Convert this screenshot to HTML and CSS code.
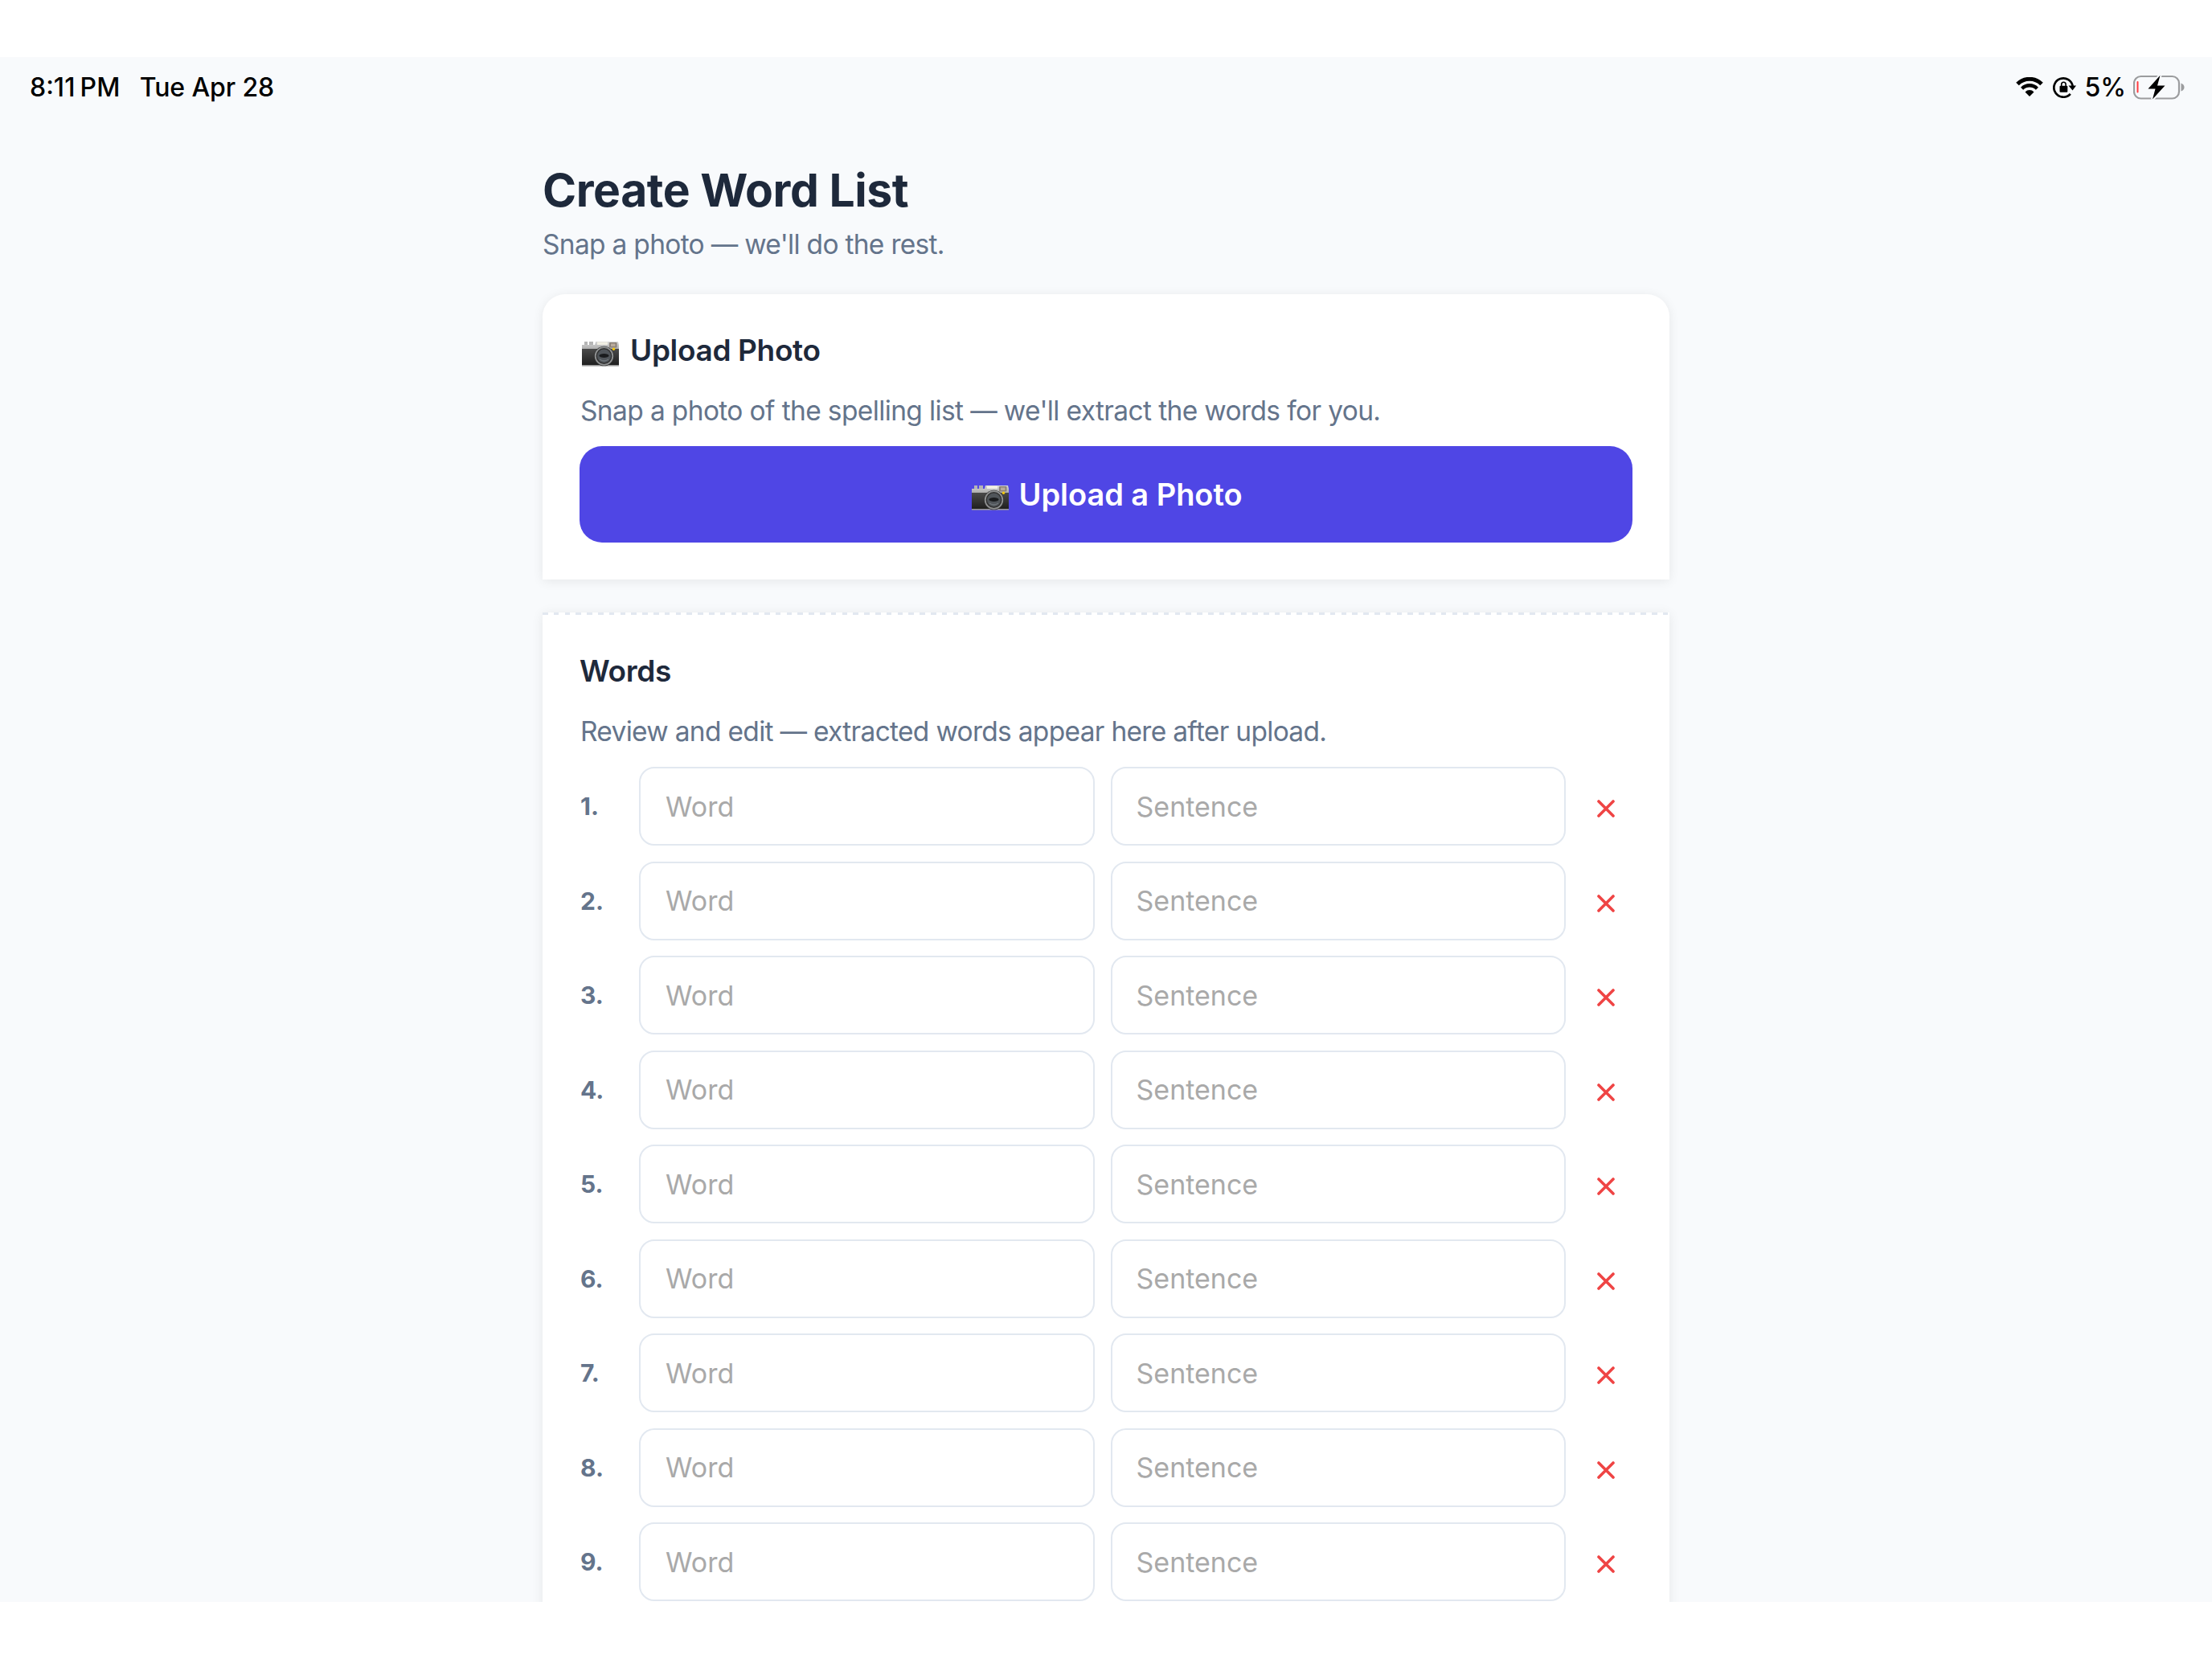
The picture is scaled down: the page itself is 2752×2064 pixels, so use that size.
FILE: index.html
```html
<!DOCTYPE html>
<html lang="en">

<head>
    <meta charset="utf-8">
    <title>Create Word List</title>
    <link rel="stylesheet" href="styles.css">
</head>

<body>
    <!-- camera icon, used in the heading and in the button -->
    <svg class="defs" width="0" height="0">
        <defs>
            <linearGradient id="silver" x1="0" y1="0" x2="0" y2="1">
                <stop offset="0" stop-color="#d6d6d6"/>
                <stop offset="1" stop-color="#a9a9a9"/>
            </linearGradient>
            <linearGradient id="leather" x1="0" y1="0" x2="0" y2="1">
                <stop offset="0" stop-color="#4a4a4a"/>
                <stop offset="1" stop-color="#1d1d1d"/>
            </linearGradient>
        </defs>
        <symbol id="camera" viewBox="0 0 46 32">
            <rect x="3" y="1" width="4" height="5" fill="#b5b5b5"/>
            <rect x="9" y="1" width="5" height="5" fill="#b5b5b5"/>
            <path d="M0 5h16l1-4h28l1 4v6H0z" fill="url(#silver)"/>
            <rect x="19" y="1.5" width="13" height="3.5" fill="#f1efe4"/>
            <rect x="0" y="10" width="46" height="21" fill="url(#leather)"/>
            <rect x="0" y="30" width="46" height="1.6" fill="#999"/>
            <rect x="34" y="2" width="9.5" height="6.5" rx="1" fill="#8b8178"/>
            <rect x="36" y="3.5" width="5.5" height="3.5" fill="#b9ab9d"/>
            <circle cx="27.5" cy="19" r="12.3" fill="#303030"/>
            <circle cx="27.5" cy="19" r="10.8" fill="none" stroke="#8f9192" stroke-width="1.8"/>
            <circle cx="27.5" cy="19" r="8.5" fill="#50555a"/>
            <ellipse cx="27.5" cy="18.5" rx="6" ry="2.5" fill="#1a1c1e"/>
            <path d="M22 23q5.5 4 11 0" fill="none" stroke="#70767b" stroke-width="1.3"/>
            <circle cx="39.5" cy="10.2" r="1.7" fill="#f5c80c"/>
        </symbol>
    </svg>

    <div class="screen">
        <div class="status">
            <span class="time">8:11<span class="pm">PM</span></span>
            <span class="date">Tue Apr 28</span>
            <div class="right">
                <svg class="wifi" viewBox="0 0 34 24">
                    <path d="M2 8.6a21 21 0 0 1 30 0" fill="none" stroke="#000" stroke-width="5"/>
                    <path d="M7.6 14.2a13.3 13.3 0 0 1 18.8 0" fill="none" stroke="#000" stroke-width="4.4"/>
                    <path d="M11.5 18.4a7.5 7.5 0 0 1 11 0l-5.500 5.500z"/>
                </svg>
                <svg class="lock" viewBox="0 0 29 27">
                    <path d="M21.8 21.8A11.7 11.7 0 1 1 24.7 13" fill="none" stroke="#000" stroke-width="2.7"/>
                    <path d="M19.5 11.500h9.500l-4.500 6z"/>
                    <rect x="8.500" y="11.800" width="9.800" height="8" rx="1"/>
                    <path d="M10.700 12.500v-2.500a2.700 2.700 0 0 1 5.400 0v2.500" fill="none" stroke="#000" stroke-width="1.600"/>
                </svg>
                <span class="percent">5%</span>
                <svg class="battery" viewBox="0 0 64 31">
                    <rect x="1" y="2" width="56" height="27.5" rx="8.5" fill="none" stroke="#9b9c9e" stroke-width="2.200"/>
                    <path d="M59.5 10.5q4 1.5 4 5t-4 5z" fill="#9b9c9e"/>
                    <rect x="4.5" y="8" width="2" height="14.5" rx="1" fill="#ff3b3f"/>
                    <path d="M33.5 .8L18.5 17.5h9L24 30.5L39.5 13.5h-9.5z" stroke="#f8fafc" stroke-width="4"/>
                    <path d="M33.5 .8L18.5 17.5h9L24 30.5L39.5 13.5h-9.5z"/>
                </svg>
            </div>
        </div>

        <div class="page">
            <h1>Create Word List</h1>
            <p class="subtitle">Snap a photo — we'll do the rest.</p>

            <div class="card upload">
                <h2><svg class="camera"><use href="#camera"/></svg><span>Upload Photo</span></h2>
                <p class="hint">Snap a photo of the spelling list — we'll extract the words for you.</p>
                <button class="btn"><svg class="camera"><use href="#camera"/></svg><span>Upload a Photo</span></button>
            </div>

            <div class="card words">
                <h2>Words</h2>
                <p>Review and edit — extracted words appear here after upload.</p>
                <div class="rows">
                    <div class="row">
                        <span class="num">1.</span>
                        <input type="text" placeholder="Word">
                        <input type="text" placeholder="Sentence">
                        <button class="del"><svg viewBox="0 0 22 22"><path d="M2 2l18 18M20 2L2 20"/></svg></button>
                    </div>
                    <div class="row">
                        <span class="num">2.</span>
                        <input type="text" placeholder="Word">
                        <input type="text" placeholder="Sentence">
                        <button class="del"><svg viewBox="0 0 22 22"><path d="M2 2l18 18M20 2L2 20"/></svg></button>
                    </div>
                    <div class="row">
                        <span class="num">3.</span>
                        <input type="text" placeholder="Word">
                        <input type="text" placeholder="Sentence">
                        <button class="del"><svg viewBox="0 0 22 22"><path d="M2 2l18 18M20 2L2 20"/></svg></button>
                    </div>
                    <div class="row">
                        <span class="num">4.</span>
                        <input type="text" placeholder="Word">
                        <input type="text" placeholder="Sentence">
                        <button class="del"><svg viewBox="0 0 22 22"><path d="M2 2l18 18M20 2L2 20"/></svg></button>
                    </div>
                    <div class="row">
                        <span class="num">5.</span>
                        <input type="text" placeholder="Word">
                        <input type="text" placeholder="Sentence">
                        <button class="del"><svg viewBox="0 0 22 22"><path d="M2 2l18 18M20 2L2 20"/></svg></button>
                    </div>
                    <div class="row">
                        <span class="num">6.</span>
                        <input type="text" placeholder="Word">
                        <input type="text" placeholder="Sentence">
                        <button class="del"><svg viewBox="0 0 22 22"><path d="M2 2l18 18M20 2L2 20"/></svg></button>
                    </div>
                    <div class="row">
                        <span class="num">7.</span>
                        <input type="text" placeholder="Word">
                        <input type="text" placeholder="Sentence">
                        <button class="del"><svg viewBox="0 0 22 22"><path d="M2 2l18 18M20 2L2 20"/></svg></button>
                    </div>
                    <div class="row">
                        <span class="num">8.</span>
                        <input type="text" placeholder="Word">
                        <input type="text" placeholder="Sentence">
                        <button class="del"><svg viewBox="0 0 22 22"><path d="M2 2l18 18M20 2L2 20"/></svg></button>
                    </div>
                    <div class="row">
                        <span class="num">9.</span>
                        <input type="text" placeholder="Word">
                        <input type="text" placeholder="Sentence">
                        <button class="del"><svg viewBox="0 0 22 22"><path d="M2 2l18 18M20 2L2 20"/></svg></button>
                    </div>
                </div>
            </div>
        </div>
    </div>
</body>

</html>
```
FILE: styles.css
```css
* {
    box-sizing: border-box;
}
body {
    margin: 0;
    padding-top: 71px;
    background-color: #fff;
    color: #1e293b;
    font-family: Inter, "Liberation Sans", sans-serif;
}
h1, h2, p {
    margin: 0;
}
input, button {
    font-family: inherit;
}
.defs {
    display: block;
    height: 0;
}
.screen {
    height: 1922px;
    overflow: hidden;
    background-color: #f8fafc;
}

/* status bar */
.status {
    display: flex;
    align-items: center;
    height: 74px;
    padding: 0 34px 0 37px;
    color: #000;
    font-size: 32px;
    font-weight: 500;
}
.pm {
    margin-left: 6px;
    letter-spacing: 0.3px;
}
.date {
    margin-left: 24px;
    letter-spacing: -0.1px;
}
.right {
    display: flex;
    align-items: center;
    margin-left: auto;
}
.wifi {
    width: 34px;
    height: 24px;
}
.lock {
    width: 29px;
    height: 27px;
    margin-left: 12px;
}
.percent {
    margin-left: 10px;
}
.battery {
    width: 64px;
    height: 31px;
    margin-left: 9px;
}

.page {
    width: 1402px;
    margin: 0 auto;
    padding-top: 57px;
}
h1 {
    font-size: 57px;
    line-height: 70px;
    font-weight: 700;
    letter-spacing: -0.45px;
}
p {
    color: #64748b;
    font-size: 33.5px;
    line-height: 50px;
    letter-spacing: -0.7px;
}
.subtitle {
    margin: 7px 0 37px;
}

/* cards */
.card {
    padding: 40px 46px 46px;
    background-color: #fff;
    box-shadow: 0 2px 14px rgba(0, 0, 0, 0.08);
}
.upload {
    border-radius: 28px 28px 0 0;
}
.words {
    margin-top: 41px;
    padding-top: 43px;
    /* long dashes along the top edge */
    background-image: repeating-linear-gradient(90deg, #e2e8f0 0, #e2e8f0 6.6px, #fff 6.6px, #fff 13.8px);
    background-size: 100% 3px;
    background-repeat: no-repeat;
}
h2 {
    display: flex;
    align-items: center;
    font-size: 37px;
    line-height: 60px;
    font-weight: 600;
    letter-spacing: -0.35px;
}
.card p {
    margin: 20px 0 19px 1px;
}
.card .hint {
    letter-spacing: -0.63px;
}
.camera {
    width: 46px;
    height: 32px;
    margin: 8px 14px 0 3px;
}
.btn {
    display: flex;
    align-items: center;
    justify-content: center;
    width: 100%;
    height: 120px;
    border: 0;
    border-radius: 28px;
    background-color: #4f46e5;
    color: #fff;
    font-size: 38px;
    font-weight: 600;
    letter-spacing: -0.05px;
}
.btn .camera {
    margin-right: 12px;
}

/* word rows */
.rows {
    display: flex;
    flex-direction: column;
    gap: 19.5px;
}
.row {
    display: grid;
    grid-template-columns: 54px 1fr 1fr 63px;
    column-gap: 20px;
    align-items: center;
    height: 98px;
}
.num {
    padding-left: 1px;
    color: #64748b;
    font-size: 30px;
    font-weight: 700;
}
input[type=text] {
    width: 100%;
    height: 98px;
    padding: 0 31px;
    border: 2px solid #e2e8f0;
    border-radius: 19px;
    background-color: #fff;
    font-size: 34px;
}
input[placeholder=Sentence] {
    padding-left: 30px;
}
input::placeholder {
    color: #a9a9a9;
}
.del {
    display: flex;
    justify-content: center;
    padding: 6px 3px 0 0;
    border: 0;
    background: none;
}
.del svg {
    width: 22px;
    height: 22px;
    fill: none;
    stroke: #ef4444;
    stroke-width: 3.6;
    stroke-linecap: round;
}
```
